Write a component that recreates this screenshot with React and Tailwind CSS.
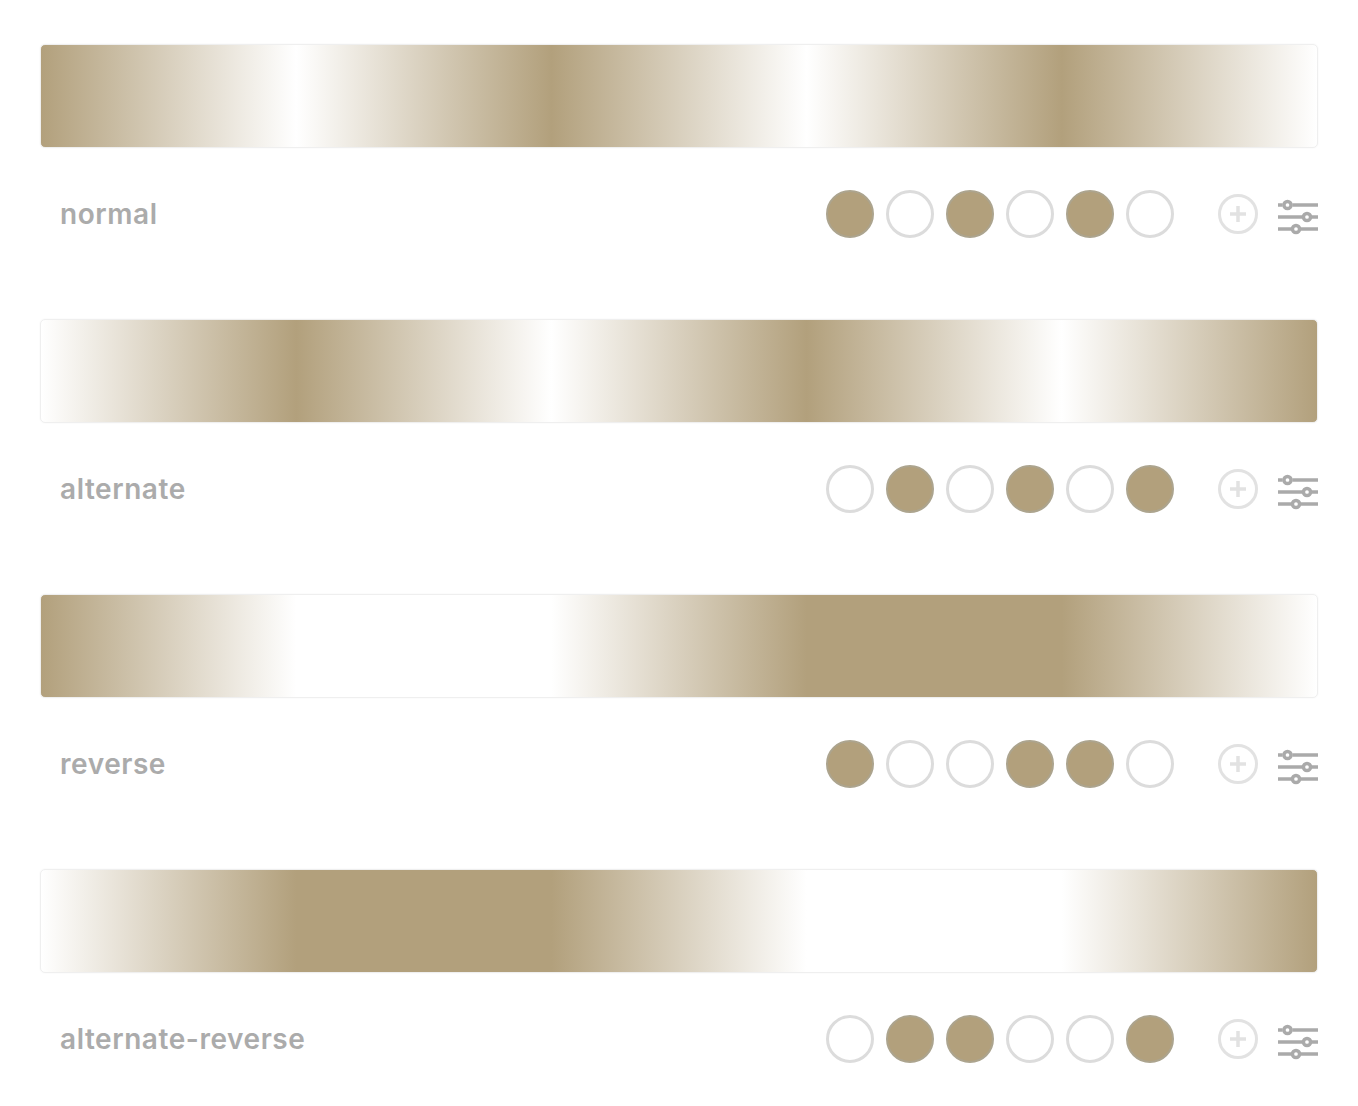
import React from "react";

const rows = [
  {
    label: "normal",
    stops: [1, 0, 1, 0, 1, 0],
    bar: "bg-[linear-gradient(to_right,#b2a07c_0%,#ffffff_20%,#b2a07c_40%,#ffffff_60%,#b2a07c_80%,#ffffff_100%)]",
  },
  {
    label: "alternate",
    stops: [0, 1, 0, 1, 0, 1],
    bar: "bg-[linear-gradient(to_right,#ffffff_0%,#b2a07c_20%,#ffffff_40%,#b2a07c_60%,#ffffff_80%,#b2a07c_100%)]",
  },
  {
    label: "reverse",
    stops: [1, 0, 0, 1, 1, 0],
    bar: "bg-[linear-gradient(to_right,#b2a07c_0%,#ffffff_20%,#ffffff_40%,#b2a07c_60%,#b2a07c_80%,#ffffff_100%)]",
  },
  {
    label: "alternate-reverse",
    stops: [0, 1, 1, 0, 0, 1],
    bar: "bg-[linear-gradient(to_right,#ffffff_0%,#b2a07c_20%,#b2a07c_40%,#ffffff_60%,#ffffff_80%,#b2a07c_100%)]",
  },
];

function PlusCircle() {
  return (
    <svg width="40" height="40" viewBox="0 0 40 40" fill="none">
      <circle cx="20" cy="20" r="18.5" stroke="#e2e2e2" strokeWidth="3" />
      <path d="M20 12v16M12 20h16" stroke="#e2e2e2" strokeWidth="3.5" />
    </svg>
  );
}

function Sliders() {
  return (
    <svg width="40" height="36" viewBox="0 0 40 36" fill="none" className="mt-[6px]">
      <g stroke="#aaaaaa" strokeWidth="3.5">
        <path d="M0 6h4.5M14.5 6H40" />
        <circle cx="9.5" cy="6" r="3.6" fill="#fff" />
        <path d="M0 18h24M34 18H40" />
        <circle cx="29" cy="18" r="3.6" fill="#fff" />
        <path d="M0 30h13M23 30H40" />
        <circle cx="18" cy="30" r="3.6" fill="#fff" />
      </g>
    </svg>
  );
}

export default function App() {
  return (
    <div
      className="min-h-screen bg-white px-10 pt-[44px]"
      style={{ fontFamily: "Inter, 'Noto Sans', sans-serif" }}
    >
      {rows.map((row) => (
        <section key={row.label} className="mb-[81px]">
          {/* gradient preview */}
          <div
            className={`h-[104px] rounded-[5px] border border-[#efefef] shadow-[0_0_2px_rgba(0,0,0,0.05)] ${row.bar}`}
          />
          <div className="mt-[42px] flex h-[48px] items-center">
            <span className="pl-[20px] text-[28px] font-semibold tracking-[0.02em] text-[#ababab]">
              {row.label}
            </span>
            <div className="ml-auto flex gap-[12px]">
              {row.stops.map((on, i) =>
                on ? (
                  <div
                    key={i}
                    className="h-[48px] w-[48px] rounded-full border-2 border-[#aca48e] bg-[#b2a07c]"
                  />
                ) : (
                  <div
                    key={i}
                    className="h-[48px] w-[48px] rounded-full border-[3px] border-[#dcdcdc] bg-white"
                  />
                )
              )}
            </div>
            <div className="ml-[44px]">
              <PlusCircle />
            </div>
            <div className="ml-[20px]">
              <Sliders />
            </div>
          </div>
        </section>
      ))}
    </div>
  );
}
